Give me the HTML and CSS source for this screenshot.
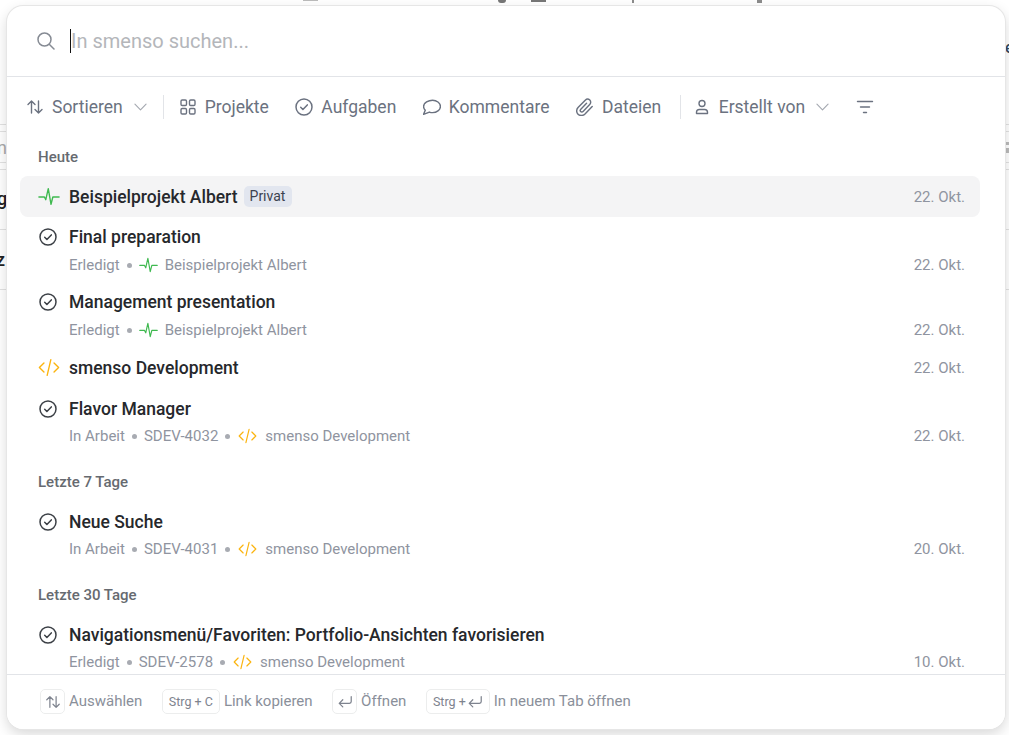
FILE: index.html
```html
<!DOCTYPE html>
<html lang="de">
<head>
<meta charset="utf-8">
<title>smenso Suche</title>
<link rel="stylesheet" href="styles.css">
</head>
<body>
<svg width="0" height="0" class="defs">
  <defs>
    <symbol id="i-check" viewBox="1 1 18 18"><circle cx="10" cy="10" r="8" fill="none" stroke="currentColor" stroke-width="1.5"/><path d="M6.7 10.3l2.2 2.2 4.4-4.6" fill="none" stroke="currentColor" stroke-width="1.5" stroke-linecap="round" stroke-linejoin="round"/></symbol>
    <symbol id="i-pulse" viewBox="0 0 24 20"><path d="M1 10.5h6l1.500 3 2.700-12 3 17 2-8h6.800" fill="none" stroke="#3fb950" stroke-width="1.500" stroke-linecap="round" stroke-linejoin="round"/></symbol>
    <symbol id="i-code" viewBox="0 0 24 20"><path d="M6.5 5L1.5 10l5 5M17.500 5l5 5-5 5M14 1.500L10 18.500" fill="none" stroke="#fbb40f" stroke-width="1.500" stroke-linecap="round" stroke-linejoin="round"/></symbol>
    <symbol id="i-sort" viewBox="0 0 18 18"><path d="M5.500 15V3M2 6.500L5.500 3 9 6.500M12.500 3v12M9 11.500l3.500 3.500 3.500-3.500" fill="none" stroke="currentColor" stroke-width="1.400" stroke-linecap="round" stroke-linejoin="round"/></symbol>
    <symbol id="i-chev" viewBox="0 0 14 8"><path d="M1 1l6 6 6-6" fill="none" stroke="currentColor" stroke-width="1.200" stroke-linecap="round" stroke-linejoin="round"/></symbol>
    <symbol id="i-enter" viewBox="0 0 18 18"><path d="M16 3v5.500a2 2 0 0 1-2 2H2.500M6.500 6.500l-4 4 4 4" fill="none" stroke="currentColor" stroke-width="1.400" stroke-linecap="round" stroke-linejoin="round"/></symbol>
  </defs>
</svg>

<div class="backdrop">
  <div class="bg-line bg-l1"></div>
  <div class="bg-line bg-l2"></div>
  <div class="bg-line bg-l3"></div>
  <div class="bg-line bg-l4"></div>
  <div class="bg-line bg-r1"></div>
  <div class="bg-line bg-r2"></div>
  <span class="bg-mark bg-m1"></span>
  <span class="bg-mark bg-m2"></span>
  <span class="bg-mark bg-m3"></span>
  <span class="bg-mark bg-m4"></span>
  <span class="bg-mark bg-m5"></span>
  <span class="bg-mark bg-m6"></span>
  <span class="bg-glyph bg-g">g</span>
  <span class="bg-glyph bg-z">z</span>
  <span class="bg-glyph bg-n">n</span>
  <span class="bg-glyph bg-e">e</span>
</div>

<main class="modal">
  <header class="search">
    <svg class="search-icon" viewBox="1 1 18 18"><circle cx="8.500" cy="8.500" r="6.500" fill="none" stroke="currentColor" stroke-width="1.500"/><path d="M13.500 13.500L18 18" fill="none" stroke="currentColor" stroke-width="1.500" stroke-linecap="round"/></svg>
    <div class="search-input"><span class="caret"></span>In smenso suchen...</div>
  </header>

  <nav class="toolbar">
    <button class="tool tool-end"><svg class="ti"><use href="#i-sort"/></svg>Sortieren<svg class="chev"><use href="#i-chev"/></svg></button>
    <span class="sep"></span>
    <button class="tool"><svg class="ti" viewBox="0 0 18 18"><g fill="none" stroke="currentColor" stroke-width="1.400"><rect x="2" y="2" width="5.500" height="5.500" rx="1.200"/><rect x="10.500" y="2" width="5.500" height="5.500" rx="1.200"/><rect x="2" y="10.500" width="5.500" height="5.500" rx="1.200"/><rect x="10.500" y="10.500" width="5.500" height="5.500" rx="1.200"/></g></svg>Projekte</button>
    <button class="tool"><svg class="ti"><use href="#i-check"/></svg>Aufgaben</button>
    <button class="tool"><svg class="ti" viewBox="1 1 16 16"><path d="M9.500 3C13 3 16.500 5.300 16.500 8.500S13 14 9.500 14c-1 0-2-.2-2.800-.5L1.500 15.500l1.500-3.700C2 10.800 1.500 9.700 1.500 8.500 1.500 5.300 6 3 9.500 3z" fill="none" stroke="currentColor" stroke-width="1.300" stroke-linejoin="round"/></svg>Kommentare</button>
    <button class="tool tool-files"><svg class="ti" viewBox="2 1.500 15 15"><path d="M15.500 8.500l-6 6.300c-1.700 1.700-4.300 1.700-5.800.2-1.600-1.600-1.500-4 .2-5.700l5.800-6c1.100-1.100 2.800-1.100 3.800-.1s1 2.700-.1 3.800l-5.500 5.700c-.6.600-1.500.6-2 .1s-.5-1.400.1-2l4.800-5" fill="none" stroke="currentColor" stroke-width="1.200" stroke-linecap="round" stroke-linejoin="round"/></svg>Dateien</button>
    <span class="sep sep-tight"></span>
    <button class="tool"><svg class="ti" viewBox="0 0 18 18"><circle cx="9" cy="5.500" r="3" fill="none" stroke="currentColor" stroke-width="1.400"/><path d="M3.500 15.500v-1.200c0-1.500 1.200-2.800 2.800-2.800h5.400c1.600 0 2.800 1.300 2.800 2.800v1.200z" fill="none" stroke="currentColor" stroke-width="1.400" stroke-linejoin="round"/></svg>Erstellt von<svg class="chev"><use href="#i-chev"/></svg></button>
    <button class="tool tool-filter"><svg class="ti" viewBox="0 0 18 18"><path d="M1.500 3.500h15M4.500 9h9M7.500 14.500h3" fill="none" stroke="currentColor" stroke-width="1.400" stroke-linecap="round"/></svg></button>
  </nav>

  <section class="results">
    <h2 class="group group-first">Heute</h2>
    <div class="row single active">
      <svg class="ico"><use href="#i-pulse"/></svg>
      <span class="title">Beispielprojekt Albert</span><span class="badge">Privat</span>
      <span class="date">22. Okt.</span>
    </div>
    <div class="row">
      <div class="line"><svg class="check"><use href="#i-check"/></svg><span class="title">Final preparation</span></div>
      <div class="meta"><span>Erledigt</span><i class="dot"></i><svg class="mi"><use href="#i-pulse"/></svg><span class="mp">Beispielprojekt Albert</span><span class="date">22. Okt.</span></div>
    </div>
    <div class="row">
      <div class="line"><svg class="check"><use href="#i-check"/></svg><span class="title">Management presentation</span></div>
      <div class="meta"><span>Erledigt</span><i class="dot"></i><svg class="mi"><use href="#i-pulse"/></svg><span class="mp">Beispielprojekt Albert</span><span class="date">22. Okt.</span></div>
    </div>
    <div class="row single">
      <svg class="ico"><use href="#i-code"/></svg>
      <span class="title">smenso Development</span>
      <span class="date">22. Okt.</span>
    </div>
    <div class="row">
      <div class="line line-low"><svg class="check"><use href="#i-check"/></svg><span class="title">Flavor Manager</span></div>
      <div class="meta"><span>In Arbeit</span><i class="dot"></i><span>SDEV-4032</span><i class="dot"></i><svg class="mi mi-code"><use href="#i-code"/></svg><span class="mp">smenso Development</span><span class="date">22. Okt.</span></div>
    </div>

    <h2 class="group">Letzte 7 Tage</h2>
    <div class="row">
      <div class="line line-low"><svg class="check"><use href="#i-check"/></svg><span class="title">Neue Suche</span></div>
      <div class="meta"><span>In Arbeit</span><i class="dot"></i><span>SDEV-4031</span><i class="dot"></i><svg class="mi mi-code"><use href="#i-code"/></svg><span class="mp">smenso Development</span><span class="date">20. Okt.</span></div>
    </div>

    <h2 class="group">Letzte 30 Tage</h2>
    <div class="row">
      <div class="line line-low"><svg class="check"><use href="#i-check"/></svg><span class="title">Navigationsmenü/Favoriten: Portfolio-Ansichten favorisieren</span></div>
      <div class="meta"><span>Erledigt</span><i class="dot"></i><span>SDEV-2578</span><i class="dot"></i><svg class="mi mi-code"><use href="#i-code"/></svg><span class="mp">smenso Development</span><span class="date">10. Okt.</span></div>
    </div>
  </section>

  <footer class="hints">
    <div class="hint"><kbd class="key key-icon"><svg class="ki"><use href="#i-sort"/></svg></kbd>Auswählen</div>
    <div class="hint"><kbd class="key">Strg + C</kbd>Link kopieren</div>
    <div class="hint"><kbd class="key key-icon"><svg class="ki"><use href="#i-enter"/></svg></kbd>Öffnen</div>
    <div class="hint"><kbd class="key">Strg +<svg class="ki"><use href="#i-enter"/></svg></kbd>In neuem Tab öffnen</div>
  </footer>
</main>
</body>
</html>
```
FILE: styles.css
```css
* { box-sizing: border-box; }
html, body { margin: 0; height: 100%; overflow: hidden; }
body { background: #fff; font-family: Roboto, "Liberation Sans", sans-serif; color: #212529; }
.defs { position: absolute; }
.backdrop { position: absolute; inset: 0; overflow: hidden; background: #fff; }
.bg-line { position: absolute; left: 0; right: 0; height: 1px; background: #e2e2e2; }
.bg-l1 { top: 124px; }
.bg-l2 { top: 169px; }
.bg-l3 { top: 229px; }
.bg-l4 { top: 289px; }
.bg-r1 { top: 131px; }
.bg-r2 { top: 162px; }
.bg-mark { position: absolute; background: #8c8c8c; }
.bg-m1 { left: 303px; top: 0; width: 15px; height: 1px; background: #bbb; }
.bg-m2 { left: 498px; top: 0; width: 8px; height: 3px; background: #777; border-radius: 0 0 4px 4px; }
.bg-m3 { left: 531px; top: 0; width: 15px; height: 2px; background: #777; }
.bg-m4 { left: 632px; top: 0; width: 2px; height: 3px; }
.bg-m5 { left: 757px; top: 0; width: 5px; height: 3px; }
.bg-m6 { left: 1006px; top: 142px; width: 3px; height: 11px; background: linear-gradient(#bbb 0 3px, #fff 3px 6px, #bbb 6px); }
.bg-glyph { position: absolute; left: -3px; font-size: 18px; line-height: 20px; font-weight: 500; color: #222; }
.bg-g { top: 189px; }
.bg-z { top: 250px; left: -4px; }
.bg-n { top: 138px; color: #aaa; font-weight: 400; }
.bg-e { top: 38px; left: 1005px; font-size: 16px; color: #34495e; }

.modal {
  position: absolute; left: 7px; top: 6px; width: 998px; height: 723px;
  display: flex; flex-direction: column;
  background: #fff; border-radius: 16px; overflow: hidden;
  box-shadow: 0 0 0 1px #e6e6e6, 0 5px 14px rgba(0,0,0,.16);
}
.search { flex: none; height: 71px; display: flex; align-items: center; padding: 0 0 0 30px; border-bottom: 1px solid #e2e4e8; }
.search-icon { width: 18px; height: 18px; color: #868b94; margin-right: 15px; flex: none; }
.search-input { display: flex; align-items: center; font-size: 20px; color: #b4b6ba; height: 24px; }
.caret { width: 1px; height: 24px; background: #111; }

.toolbar { flex: none; height: 60px; display: flex; align-items: center; padding: 0 0 0 19px; color: #6b7280; }
.tool { display: inline-flex; align-items: center; border: 0; background: none; padding: 0; margin: 0 26.500px 0 0; font: 400 17.500px Roboto, sans-serif; color: #6b7280; }
.tool-end { margin-right: 0; }
.tool-files { margin-right: 3px; }
.ti { width: 18px; height: 18px; margin-right: 8px; flex: none; }
.chev { width: 13px; height: 8px; margin-left: 11px; color: #a4a8b0; }
.sep { width: 1px; height: 24px; background: #e2e4e8; margin: 0 15px 0 16px; }
.sep-tight { margin-right: 11.500px; }
.tool-filter { margin: 0; }
.tool-filter .ti { margin: 0; }

.results { flex: 1; min-height: 0; overflow: hidden; padding: 0 25px 0 13px; }
.group { margin: 0; height: 48px; padding: 19px 0 0 18px; font-size: 15px; line-height: 20px; font-weight: 500; color: #666a70; }
.group-first { margin-top: -9px; }
.row { height: 65px; padding: 0 15px 0 18px; }
.row.single { height: 41px; display: flex; align-items: center; border-radius: 8px; }
.row.active { background: #f4f4f5; }
.line { height: 40px; display: flex; align-items: center; }
.line-low { height: 41px; padding-top: 1px; margin-bottom: -1px; }
.ico { width: 22px; height: 19px; margin-right: 9px; flex: none; }
.check { width: 18px; height: 18px; margin: 0 12px 0 1px; color: #3c4046; flex: none; }
.title { font-size: 17.500px; font-weight: 500; color: #26282c; }
.badge { margin-left: 6px; padding: 0 7px 0 6px; height: 21px; line-height: 21px; border-radius: 5px; background: #e2e6ef; font-size: 14px; color: #3c4250; }
.date { margin-left: auto; font-size: 15px; color: #8f94a0; }
.meta { display: flex; align-items: center; height: 16px; padding-left: 31px; font-size: 15px; color: #8f94a0; }
.dot { width: 5px; height: 5px; border-radius: 50%; background: #a8abb2; margin: 0 7px; flex: none; }
.mi { width: 19px; height: 16px; margin-right: 7px; flex: none; }
.mi-code { margin-left: 1px; margin-right: 8px; }
.hints { flex: none; height: 55px; border-top: 1px solid #e2e4e8; display: flex; align-items: center; padding: 0 0 1px 33px; gap: 19.500px; font-size: 15px; line-height: 17px; color: #8a8f9a; background: #fff; }
.hint { display: flex; align-items: center; gap: 4px; }
.key { display: inline-flex; align-items: center; justify-content: center; height: 25px; min-width: 25px; padding: 0 6px; border: 1px solid #eceded; border-radius: 5px; font: 400 12.500px Roboto, sans-serif; color: #7e838e; }
.key-icon { padding: 0; }
.ki { width: 16px; height: 16px; margin-left: 1px; }
```
